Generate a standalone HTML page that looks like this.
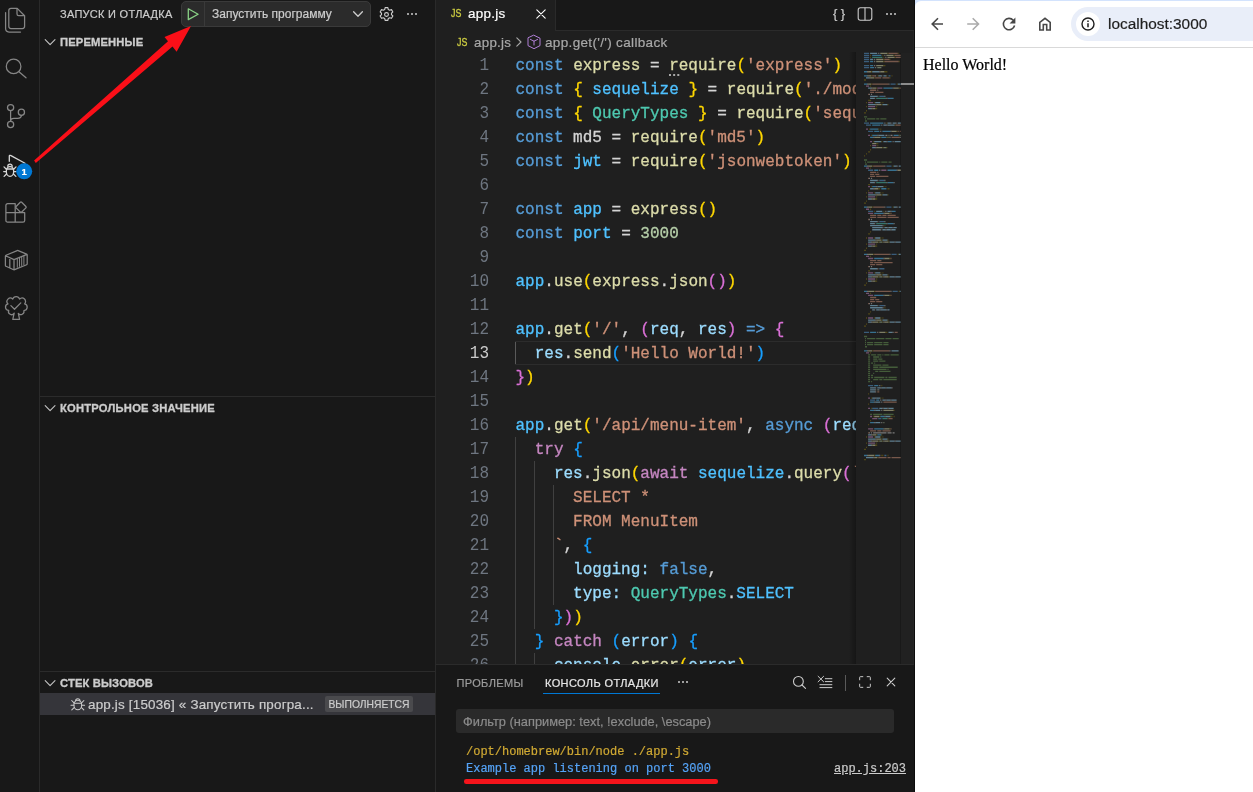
<!DOCTYPE html>
<html lang="ru">
<head>
<meta charset="utf-8">
<title>app.js</title>
<style>
*{box-sizing:border-box;margin:0;padding:0}
html,body{width:1253px;height:792px;overflow:hidden;background:#181818}
body{position:relative;font-family:"Liberation Sans",sans-serif;color:#ccc;font-size:13px}
.abs{position:absolute}
#activity,#sidebar,#editor,#panel,#browser{will-change:transform}
#activity{left:0;top:0;width:40px;height:792px;background:#181818;border-right:1px solid #2a2a2a}
#sidebar{left:40px;top:0;width:396px;height:792px;background:#181818;border-right:1px solid #2a2a2a}
#editor{left:436px;top:0;width:479px;height:664px;background:#1f1f1f;overflow:hidden}
#panel{left:436px;top:664px;width:479px;height:128px;background:#181818;border-top:1px solid #2b2b2b}
#browser{left:915px;top:0;width:338px;height:792px;background:#fff}
.t{position:absolute;white-space:pre;line-height:1;-webkit-text-stroke:.2px}
.sb-title{font-size:11px;color:#ccc;left:20px;top:9px;letter-spacing:.27px}
.hdr{position:absolute;left:0;width:395px;height:22px}
.hdr .t{-webkit-text-stroke:.3px;font-weight:bold;font-size:11.200px;letter-spacing:.15px;color:#ccc;left:20px;top:6px}
.sep{position:absolute;left:0;width:395px;height:1px;background:#2b2b2b}
/* code */
#code{position:absolute;left:0.5px;top:53.5px;width:419px;height:612px;font-family:"Liberation Mono",monospace;font-size:16px;line-height:24px}
.ln{transform:scaleY(1.09);transform-origin:0 16.200px;position:absolute;left:0;width:52.5px;text-align:right;color:#6e7681;height:24px;white-space:pre}
.cl{-webkit-text-stroke:.3px;position:absolute;left:79px;height:24px;white-space:pre;color:#d4d4d4}
.k{color:#569cd6}.v{color:#9cdcfe}.c{color:#4fc1ff}.f{color:#dcdcaa}.s{color:#ce9178}.n{color:#b5cea8}
.ty{color:#4ec9b0}.p1{color:#ffd700}.p2{color:#da70d6}.p3{color:#179fff}.ct{color:#c586c0}.w{color:#d4d4d4}
.js{font-size:9.800px;color:#cbcb41;transform:scale(.9,1.08);transform-origin:0 0;-webkit-text-stroke:.35px}
.ln.cur{color:#ccc}
.guide{position:absolute;width:1px;background:#404040}
</style>
</head>
<body>
<div id="activity" class="abs">
<svg class="abs" style="left:0;top:0" width="40" height="340" viewBox="0 0 40 340" fill="none" stroke="#868686" stroke-width="1.25" stroke-linejoin="round" stroke-linecap="round">
 <!-- files -->
 <path d="M11 8.400h6.200l7.400 7.400v10.500a2.200 2.200 0 0 1-2.200 2.200h-11.400a2.200 2.200 0 0 1-2.200-2.200v-15.700a2.200 2.200 0 0 1 2.200-2.200z"/>
 <path d="M17 8.600v5.400a1.700 1.700 0 0 0 1.700 1.700h5.700"/>
 <path d="M5.600 12.600v16a3.400 3.400 0 0 0 3.400 3.400h11.500"/>
 <!-- search -->
 <circle cx="13.6" cy="66.4" r="7.3"/>
 <path d="M19 71.8l7 6"/>
 <!-- git -->
 <circle cx="10.600" cy="107.600" r="3.100"/>
 <circle cx="21.400" cy="112.200" r="3.100"/>
 <circle cx="10.600" cy="124.400" r="3.100"/>
 <path d="M10.600 110.700v10.500M21.400 115.300c0 2.200-1.400 3-3.800 3h-3.800c-2 0-3.200.9-3.200 2.600"/>
 <!-- extensions -->
 <path d="M15.200 203.700h-7.600a1.700 1.700 0 0 0-1.700 1.700v15a1.700 1.700 0 0 0 1.700 1.700h15.400a1.700 1.700 0 0 0 1.700-1.700v-7.700h-9.500zM5.900 212.700h9.300M15.200 212.700v9.400"/>
 <path d="M20.300 202.200a1 1 0 0 1 1.400 0l4.200 4.300a1 1 0 0 1 0 1.400l-4.200 4.100a1 1 0 0 1-1.400 0l-4.200-4.100a1 1 0 0 1 0-1.400z"/>
 <!-- container -->
 <path d="M5.400 256.200a1 1 0 0 1 .6-.9l11.200-4.700a1.300 1.300 0 0 1 1 0l8.400 3.500a1 1 0 0 1 .6.900v8.800a1 1 0 0 1-.6.900l-12 5a1.300 1.300 0 0 1-1 0l-7.600-3.400a1 1 0 0 1-.6-.9zM5.600 255.700l8.400 3.900 13-5.300M14 259.600v10M9.800 257.800v10"/>
 <path d="M17.300 259v8.300M19.500 258.100v8.300M21.700 257.200v8.300M23.900 256.300v8.300" stroke-width="1"/>
 <!-- testing tree -->
 <path d="M14.200 313.200a3.100 3.100 0 0 1-5.500-2.800a3.300 3.300 0 0 1-.7-6.500a3.200 3.200 0 0 1 4.700-4.800a3.600 3.600 0 0 1 6.900 0a3.200 3.200 0 0 1 5 4.800a3.400 3.400 0 0 1-.7 6.700a3.200 3.200 0 0 1-5.600 2.800l1.300 6h-6.800z"/>
 <path d="M10.900 305.600l3.600 3.700 6.300-6.400"/>
</svg>
<svg class="abs" style="left:0;top:150px" width="40" height="34" viewBox="0 150 40 34" fill="none" stroke="#d7d7d7" stroke-width="1.3" stroke-linejoin="round" stroke-linecap="round">
 <path d="M9.300 161.300v-5.200a.8.800 0 0 1 1.200-.7l14.500 7.900"/>
 <ellipse cx="10" cy="171.400" rx="3.700" ry="4.900"/>
 <path d="M6.500 169h7M7.800 166.300a2.200 2.200 0 0 1 4.400 0M6.300 169.200l-2.300-2.300M6.200 171.600h-2.500M6.500 174l-2.400 2.400M13.700 169.200l2.300-2.300M13.800 171.600h2.500M13.500 174l2.400 2.400"/>
 <circle cx="24.200" cy="171.300" r="8" fill="#0078d4" stroke="none"/>
</svg>
<div class="t" style="left:20.200px;top:166.500px;width:8px;text-align:center;font-size:9.500px;font-weight:bold;color:#fff">1</div>
</div>
<div id="sidebar" class="abs">
  <div class="t sb-title">ЗАПУСК И ОТЛАДКА</div>
  <div class="abs" style="left:141px;top:1px;width:190px;height:26px;background:#2b2b2b;border:1px solid #3a3a3a;border-radius:5px"></div>
  <div class="abs" style="left:164px;top:2px;width:1px;height:24px;background:#3a3a3a"></div>
  <svg class="abs" style="left:146px;top:7px" width="14" height="14" viewBox="0 0 14 14" fill="none" stroke="#89d185" stroke-width="1.3" stroke-linejoin="round"><path d="M2.300 1.800l9.800 5.400-9.800 5.400z"/></svg>
  <div class="t" style="left:172px;top:8px;font-size:12px;color:#ccc">Запустить программу</div>
  <svg class="abs" style="left:311px;top:9px" width="14" height="10" viewBox="0 0 14 10" fill="none" stroke="#ccc" stroke-width="1.300" stroke-linecap="round" stroke-linejoin="round"><path d="M2.600 2.700l4.400 4.600 4.400-4.600"/></svg>
  <svg class="abs" style="left:337.500px;top:5.700px" width="17" height="17" viewBox="0 0 16 16" fill="none" stroke="#ccc" stroke-width="1.050"><circle cx="8" cy="8" r="1.800"/><path stroke-linejoin="round" d="M6.700 1.500h2.600l.4 1.800 1.300.7 1.700-.6 1.300 2.200-1.300 1.200v1.400l1.300 1.200-1.300 2.200-1.700-.6-1.300.7-.4 1.800h-2.600l-.4-1.800-1.300-.7-1.700.6-1.300-2.200 1.300-1.200v-1.400l-1.300-1.200 1.300-2.200 1.700.6 1.300-.7z"/></svg>
  <div class="abs" style="left:366.500px;top:13px;width:2px;height:2px;background:#ccc;border-radius:1px;box-shadow:4px 0 0 #ccc,8px 0 0 #ccc"></div>

  <div class="hdr" style="top:31px"><svg class="abs" style="left:4px;top:6px" width="12" height="10" viewBox="0 0 12 10" fill="none" stroke="#c4c4c4" stroke-width="1.100" stroke-linecap="round" stroke-linejoin="round"><path d="M1.200 2.600l4.900 5 4.900-5"/></svg><div class="t">ПЕРЕМЕННЫЕ</div></div>
  <div class="sep" style="top:396px"></div>
  <div class="hdr" style="top:397px"><svg class="abs" style="left:4px;top:6px" width="12" height="10" viewBox="0 0 12 10" fill="none" stroke="#c4c4c4" stroke-width="1.100" stroke-linecap="round" stroke-linejoin="round"><path d="M1.200 2.600l4.900 5 4.900-5"/></svg><div class="t" style="letter-spacing:.22px">КОНТРОЛЬНОЕ ЗНАЧЕНИЕ</div></div>
  <div class="sep" style="top:671px"></div>
  <div class="hdr" style="top:672px"><svg class="abs" style="left:4px;top:6px" width="12" height="10" viewBox="0 0 12 10" fill="none" stroke="#c4c4c4" stroke-width="1.100" stroke-linecap="round" stroke-linejoin="round"><path d="M1.200 2.600l4.900 5 4.900-5"/></svg><div class="t">СТЕК ВЫЗОВОВ</div></div>
  <div class="abs" style="left:0;top:693px;width:395px;height:22px;background:#35353a"></div>
  <svg class="abs" style="left:29px;top:696px" width="18" height="18" viewBox="0 0 18 18" fill="none" stroke="#ccc" stroke-width="1.050" stroke-linecap="round"><ellipse cx="8.800" cy="9" rx="3.900" ry="4.700"/><path d="M5.200 7.200h7.200M6.600 4.900a2.200 2.200 0 0 1 4.400 0M5 6.800l-2.300-2.300M4.900 9.200h-2.900M5.100 11.600l-2.300 2.300M12.600 6.800l2.300-2.300M12.700 9.200h2.900M12.500 11.600l2.300 2.300"/></svg>
  <div class="t" style="left:48px;top:697.500px;font-size:13.400px;letter-spacing:.2px;color:#ccc">app.js [15036] « Запустить програ...</div>
  <div class="abs" style="left:285px;top:696px;width:88px;height:16px;background:#4a4a4d;border-radius:2px"></div>
  <div class="t" style="left:288.500px;top:699.500px;font-size:10.300px;color:#ccc">ВЫПОЛНЯЕТСЯ</div>
</div>
<div id="editor" class="abs">
  <!-- tab bar -->
  <div class="abs" style="left:0;top:0;width:479px;height:31px;background:#181818;border-bottom:1px solid #2b2b2b"></div>
  <div class="abs" style="left:0;top:0;width:120px;height:31px;background:#1f1f1f;border-right:1px solid #2a2a2a"></div>
  <div class="t js" style="left:15px;top:8px">JS</div>
  <div class="t" style="left:32px;top:7px;font-size:13.400px;letter-spacing:.3px;color:#fff">app.js</div>
  <svg class="abs" style="left:99px;top:8px" width="12" height="12" viewBox="0 0 12 12" fill="none" stroke="#fff" stroke-width="1.100" stroke-linecap="round"><path d="M1.800 1.800l8.400 8.400M10.200 1.800l-8.400 8.400"/></svg>
  <div class="t" style="left:397px;top:6.500px;font-size:13px;color:#ccc;letter-spacing:3.500px">{}</div>
  <svg class="abs" style="left:421px;top:6px" width="16" height="16" viewBox="0 0 16 16" fill="none" stroke="#ccc" stroke-width="1.100"><rect x="1.200" y="1.700" width="13.600" height="12.600" rx="2.200"/><path d="M8 1.700v12.600"/></svg>
  <div class="abs" style="left:449.500px;top:13px;width:2px;height:2px;background:#ccc;border-radius:1px;box-shadow:4px 0 0 #ccc,8px 0 0 #ccc"></div>
  <!-- breadcrumbs -->
  <div class="t js" style="left:20.500px;top:36.800px">JS</div>
  <div class="t" style="left:38px;top:35.500px;font-size:13.300px;letter-spacing:.3px;color:#a9a9a9">app.js</div>
  <svg class="abs" style="left:78px;top:36px" width="10" height="12" viewBox="0 0 10 12" fill="none" stroke="#a9a9a9" stroke-width="1.100" stroke-linecap="round" stroke-linejoin="round"><path d="M2.800 1.800l4.200 4.200-4.200 4.200"/></svg>
  <svg class="abs" style="left:90px;top:34px" width="16" height="16" viewBox="0 0 16 16" fill="none" stroke="#b180d7" stroke-width="1" stroke-linejoin="round" stroke-linecap="round"><path d="M8 1.300l6 2.900v7.400l-6 3.100-6-3.100v-7.400z"/><path d="M4.400 5.400l3.600 1.800 3.600-1.800M8 7.200v3.800"/></svg>
  <div class="t" style="left:109px;top:35.500px;font-size:13.500px;letter-spacing:.34px;color:#a9a9a9">app.get('/') callback</div>
  <!-- code -->
  <div id="code">
  <div class="abs" style="left:78.5px;top:287.5px;width:352px;height:24px;border:1px solid #2c2c2c"></div>
  <div class="guide" style="left:78.5px;top:383.5px;height:228px"></div>
  <div class="guide" style="left:97.5px;top:407.5px;height:168px"></div>
  <div class="guide" style="left:97.5px;top:599.5px;height:12px"></div>
  <div class="guide" style="left:116.5px;top:431.5px;height:120px"></div>
  <div class="guide" style="left:78.5px;top:288.5px;height:22px;background:#5a5a5a"></div>
<div class="ln" style="top:0px">1</div>
<div class="cl" style="top:0px"><span class="k">const</span> <span class="f">express</span> = <span class="f">require</span><span class="p1">(</span><span class="s">'express'</span><span class="p1">)</span></div>
<div class="ln" style="top:24px">2</div>
<div class="cl" style="top:24px"><span class="k">const</span> <span class="p1">{</span> <span class="c">sequelize</span> <span class="p1">}</span> = <span class="f">require</span><span class="p1">(</span><span class="s">'./models'</span><span class="p1">)</span></div>
<div class="ln" style="top:48px">3</div>
<div class="cl" style="top:48px"><span class="k">const</span> <span class="p1">{</span> <span class="ty">QueryTypes</span> <span class="p1">}</span> = <span class="f">require</span><span class="p1">(</span><span class="s">'sequelize'</span><span class="p1">)</span></div>
<div class="ln" style="top:72px">4</div>
<div class="cl" style="top:72px"><span class="k">const</span> md5 = <span class="f">require</span><span class="p1">(</span><span class="s">'md5'</span><span class="p1">)</span></div>
<div class="ln" style="top:96px">5</div>
<div class="cl" style="top:96px"><span class="k">const</span> <span class="c">jwt</span> = <span class="f">require</span><span class="p1">(</span><span class="s">'jsonwebtoken'</span><span class="p1">)</span></div>
<div class="ln" style="top:120px">6</div>
<div class="ln" style="top:144px">7</div>
<div class="cl" style="top:144px"><span class="k">const</span> <span class="c">app</span> = <span class="f">express</span><span class="p1">()</span></div>
<div class="ln" style="top:168px">8</div>
<div class="cl" style="top:168px"><span class="k">const</span> <span class="c">port</span> = <span class="n">3000</span></div>
<div class="ln" style="top:192px">9</div>
<div class="ln" style="top:216px">10</div>
<div class="cl" style="top:216px"><span class="c">app</span>.<span class="f">use</span><span class="p1">(</span><span class="f">express</span>.<span class="f">json</span><span class="p2">()</span><span class="p1">)</span></div>
<div class="ln" style="top:240px">11</div>
<div class="ln" style="top:264px">12</div>
<div class="cl" style="top:264px"><span class="c">app</span>.<span class="f">get</span><span class="p1">(</span><span class="s">'/'</span>, <span class="p2">(</span><span class="v">req</span>, <span class="v">res</span><span class="p2">)</span> <span class="k">=&gt;</span> <span class="p2">{</span></div>
<div class="ln cur" style="top:288px">13</div>
<div class="cl" style="top:288px">  <span class="v">res</span>.<span class="f">send</span><span class="p3">(</span><span class="s">'Hello World!'</span><span class="p3">)</span></div>
<div class="ln" style="top:312px">14</div>
<div class="cl" style="top:312px"><span class="p2">}</span><span class="p1">)</span></div>
<div class="ln" style="top:336px">15</div>
<div class="ln" style="top:360px">16</div>
<div class="cl" style="top:360px"><span class="c">app</span>.<span class="f">get</span><span class="p1">(</span><span class="s">'/api/menu-item'</span>, <span class="k">async</span> <span class="p2">(</span><span class="v">req</span>, <span class="v">res</span><span class="p2">)</span> <span class="k">=&gt;</span> <span class="p2">{</span></div>
<div class="ln" style="top:384px">17</div>
<div class="cl" style="top:384px">  <span class="ct">try</span> <span class="p3">{</span></div>
<div class="ln" style="top:408px">18</div>
<div class="cl" style="top:408px">    <span class="v">res</span>.<span class="f">json</span><span class="p1">(</span><span class="ct">await</span> <span class="c">sequelize</span>.<span class="f">query</span><span class="p2">(</span><span class="s">`</span></div>
<div class="ln" style="top:432px">19</div>
<div class="cl" style="top:432px"><span class="s">      SELECT *</span></div>
<div class="ln" style="top:456px">20</div>
<div class="cl" style="top:456px"><span class="s">      FROM MenuItem</span></div>
<div class="ln" style="top:480px">21</div>
<div class="cl" style="top:480px"><span class="s">    `</span>, <span class="p3">{</span></div>
<div class="ln" style="top:504px">22</div>
<div class="cl" style="top:504px">      <span class="v">logging</span><span class="v">:</span> <span class="k">false</span>,</div>
<div class="ln" style="top:528px">23</div>
<div class="cl" style="top:528px">      <span class="v">type</span><span class="v">:</span> <span class="ty">QueryTypes</span>.<span class="c">SELECT</span></div>
<div class="ln" style="top:552px">24</div>
<div class="cl" style="top:552px">    <span class="p3">}</span><span class="p2">)</span><span class="p1">)</span></div>
<div class="ln" style="top:576px">25</div>
<div class="cl" style="top:576px">  <span class="p3">}</span> <span class="ct">catch</span> <span class="p3">(</span><span class="v">error</span><span class="p3">)</span> <span class="p3">{</span></div>
<div class="ln" style="top:600px">26</div>
<div class="cl" style="top:600px">    <span class="v">console</span>.<span class="f">error</span><span class="p1">(</span><span class="v">error</span><span class="p1">)</span></div>
  </div>
  <div class="abs" style="left:232.800px;top:74px;width:2px;height:2px;background:#a8a8a8;box-shadow:4.150px 0 0 #a8a8a8,8.300px 0 0 #a8a8a8"></div>
  <!-- minimap -->
  <div class="abs" style="left:413px;top:52px;width:8px;height:612px;background:linear-gradient(90deg,rgba(0,0,0,0),rgba(0,0,0,.35))"></div>
  <div class="abs" style="left:420px;top:52px;width:45px;height:612px;background:#1f1f1f"></div>
  <div class="abs" style="left:464px;top:53px;width:14px;height:611px;background:#212121;border-left:1px solid #191919"></div>
  <div class="abs" style="left:477px;top:31px;width:1px;height:633px;background:#252525"></div>
  <div class="abs" style="left:465px;top:83px;width:13px;height:2px;background:#8c8c8c"></div>
  <div class="abs" style="left:478px;top:0;width:1px;height:664px;background:#181818"></div>
  <svg class="abs" style="left:428px;top:0" width="37" height="664" viewBox="864 0 37 664" fill="none" stroke-width="1.3" opacity=".5">
<path stroke="#569cd6" d="M864 53.3h5.1M864 55.35h5.1M864 57.4h5.1M864 59.46h5.1M864 61.51h5.1M864 65.61h5.1M864 67.66h5.1M888.5 75.87h2M890.5 84.08h5.1M879.3 96.39h5.1M864 123.07h5.1M866 125.12h5.1M868.1 131.28h5.1M886.4 166.16h5.1M868.1 170.26h5.1M879.3 180.52h5.1M886.4 207.2h5.1M868.1 211.3h5.1M879.3 221.56h5.1M891.5 254.4h5.1M879.3 268.76h5.1M892.6 291.33h5.1M879.3 305.7h5.1M864 332.37h5.1M868.1 385.72h5.1M870.1 400.09h5.1M872.2 408.3h6.1M878.3 418.56h3.1M884.4 455.49h2"/>
<path stroke="#9cdcfe" d="M870.1 53.3h7.1M870.1 59.46h3.1M872.2 71.77h7.1M878.3 75.87h3.1M883.4 75.87h3.1M866 77.92h3.1M897.7 84.08h3.1M868.1 88.18h3.1M870.1 96.39h7.1M870.1 98.44h4.1M875.2 102.55h5.1M868.1 104.6h7.1M882.4 104.6h5.1M868.1 108.7h3.1M887.5 123.07h3.1M892.6 123.07h3.1M897.7 123.07h3.1M883.4 125.12h3.1M887.5 125.12h7.1M878.3 135.38h6.1M874.2 141.54h7.1M883.4 141.54h3.1M894.6 141.54h6.1M872.2 147.69h3.1M893.6 166.16h3.1M898.7 166.16h2M870.1 180.52h7.1M870.1 182.58h4.1M877.3 186.68h6.1M870.1 188.73h3.1M875.2 192.84h5.1M868.1 194.89h7.1M882.4 194.89h5.1M868.1 198.99h3.1M893.6 207.2h3.1M898.7 207.2h2M876.2 211.3h6.1M887.5 211.3h3.1M870.1 221.56h7.1M870.1 223.62h4.1M870.1 225.67h12.2M872.2 227.72h10.2M884.4 227.72h3.1M888.5 227.72h4.1M893.6 227.72h3.1M872.2 229.77h8.2M882.4 229.77h3.1M886.4 229.77h4.1M891.5 229.77h4.1M875.2 237.98h5.1M868.1 240.03h7.1M882.4 240.03h5.1M868.1 242.08h3.1M889.5 242.08h5.1M895.6 242.08h5.1M868.1 246.19h3.1M898.7 254.4h2M870.1 268.76h7.1M875.2 272.86h5.1M868.1 274.92h7.1M882.4 274.92h5.1M868.1 276.97h3.1M889.5 276.97h5.1M895.6 276.97h5.1M868.1 281.07h3.1M899.7 291.33h1M870.1 305.7h7.1M870.1 307.75h12.2M872.2 309.8h2M876.2 309.8h3.1M880.3 309.8h6.1M887.5 309.8h2M875.2 318.01h5.1M868.1 320.06h7.1M882.4 320.06h5.1M868.1 322.11h3.1M889.5 322.11h5.1M895.6 322.11h5.1M888.5 332.37h4.1M891.5 350.84h7.1M870.1 387.78h5.1M877.3 387.78h3.1M881.3 387.78h4.1M886.4 387.78h5.1M870.1 389.83h5.1M870.1 391.88h5.1M872.2 398.04h3.1M876.2 398.04h4.1M882.4 400.09h3.1M886.4 400.09h4.1M891.5 400.09h5.1M875.2 402.14h5.1M879.3 408.3h3.1M883.4 408.3h4.1M888.5 408.3h5.1M875.2 410.35h5.1M885.4 416.5h5.1M875.2 422.66h5.1M868.1 434.97h3.1M875.2 437.02h5.1M868.1 439.08h7.1M882.4 439.08h5.1M868.1 441.13h3.1M889.5 441.13h5.1M895.6 441.13h5.1M868.1 445.23h3.1M866 457.54h7.1"/>
<path stroke="#4fc1ff" d="M872.2 55.35h9.2M870.1 61.51h3.1M870.1 65.61h3.1M870.1 67.66h4.1M864 71.77h3.1M864 75.87h3.1M864 84.08h3.1M883.4 88.18h9.2M887.5 98.44h6.1M870.1 123.07h13.3M872.2 125.12h8.2M870.1 129.22h8.2M874.2 131.28h5.1M882.4 131.28h8.2M872.2 135.38h5.1M893.6 135.38h5.1M870.1 137.43h3.1M881.3 137.43h5.1M887.5 141.54h4.1M864 166.16h3.1M874.2 170.26h4.1M887.5 170.26h9.2M887.5 182.58h6.1M872.2 186.68h4.1M881.3 188.73h5.1M864 207.2h3.1M891.5 211.3h4.1M874.2 213.36h9.2M887.5 223.62h6.1M864 254.4h3.1M874.2 258.5h9.2M864 291.33h3.1M874.2 295.44h9.2M870.1 332.37h6.1M864 350.84h3.1M874.2 385.72h4.1M876.2 400.09h3.1M870.1 402.14h4.1M870.1 410.35h4.1M880.3 416.5h4.1M870.1 422.66h4.1M874.2 428.82h9.2M877.3 434.97h4.1M864 455.49h3.1M875.2 455.49h4.1"/>
<path stroke="#dcdcaa" d="M880.3 53.3h7.1M886.4 55.35h7.1M887.5 57.4h7.1M876.2 59.46h7.1M876.2 61.51h7.1M876.2 65.61h7.1M868.1 71.77h3.1M880.3 71.77h4.1M868.1 75.87h3.1M870.1 77.92h4.1M868.1 84.08h3.1M872.2 88.18h4.1M893.6 88.18h5.1M876.2 104.6h5.1M872.2 108.7h3.1M891.5 131.28h5.1M874.2 137.43h6.1M872.2 143.59h4.1M876.2 147.69h6.1M868.1 166.16h4.1M897.7 170.26h3.1M874.2 188.73h4.1M876.2 194.89h5.1M872.2 198.99h3.1M868.1 207.2h4.1M884.4 213.36h5.1M876.2 240.03h5.1M872.2 242.08h6.1M884.4 242.08h4.1M872.2 246.19h3.1M868.1 254.4h5.1M884.4 258.5h5.1M876.2 274.92h5.1M872.2 276.97h6.1M884.4 276.97h4.1M872.2 281.07h3.1M868.1 291.33h6.1M884.4 295.44h5.1M876.2 320.06h5.1M872.2 322.11h6.1M884.4 322.11h4.1M879.3 332.37h6.1M868.1 350.84h4.1M883.4 410.35h10.2M874.2 416.5h5.1M884.4 428.82h5.1M872.2 434.97h4.1M876.2 439.08h5.1M872.2 441.13h6.1M884.4 441.13h4.1M872.2 445.23h3.1M868.1 455.49h6.1M874.2 457.54h3.1"/>
<path stroke="#ce9178" d="M888.5 53.3h9.2M894.6 55.35h6.1M895.6 57.4h5.1M884.4 59.46h5.1M884.4 61.51h14.3M872.2 75.87h3.1M875.2 77.92h6.1M882.4 77.92h7.1M872.2 84.08h16.3M899.7 88.18h1M870.1 90.24h6.1M877.3 90.24h1M870.1 92.29h4.1M875.2 92.29h8.2M868.1 94.34h1M895.6 125.12h5.1M897.7 131.28h1M899.7 131.28h1M891.5 137.43h8.2M873.2 166.16h11.2M870.1 172.32h6.1M877.3 172.32h1M870.1 174.37h4.1M875.2 174.37h4.1M870.1 176.42h5.1M876.2 176.42h12.2M868.1 178.47h1M873.2 207.2h11.2M890.5 213.36h1M870.1 215.41h6.1M877.3 215.41h4.1M882.4 215.41h4.1M887.5 215.41h8.2M870.1 217.46h6.1M877.3 217.46h9.2M887.5 217.46h11.2M868.1 219.51h1M874.2 254.4h15.3M890.5 258.5h1M870.1 260.55h6.1M877.3 260.55h4.1M870.1 262.6h3.1M874.2 262.6h18.4M870.1 264.66h5.1M876.2 264.66h6.1M868.1 266.71h1M875.2 291.33h15.3M890.5 295.44h1M870.1 297.49h6.1M870.1 299.54h4.1M875.2 299.54h4.1M870.1 301.59h5.1M876.2 301.59h6.1M868.1 303.64h1M894.6 332.37h3.1M873.2 350.84h16.3M877.3 391.88h2M883.4 402.14h13.3M888.5 418.56h4.1M890.5 428.82h1M870.1 430.87h6.1M877.3 430.87h4.1M882.4 430.87h8.2M868.1 432.92h1M878.3 457.54h8.2M887.5 457.54h3.1M891.5 457.54h9.2"/>
<path stroke="#b5cea8" d="M877.3 67.66h4.1M888.5 135.38h1M899.7 135.38h1M887.5 137.43h1M883.4 147.69h3.1M879.3 242.08h3.1M879.3 276.97h3.1M879.3 322.11h3.1M877.3 389.83h1M883.4 422.66h1M879.3 441.13h3.1"/>
<path stroke="#4ec9b0" d="M872.2 57.4h10.2M876.2 98.44h10.2M876.2 182.58h10.2M876.2 223.62h10.2M882.4 418.56h5.1"/>
<path stroke="#ffd700" stroke-opacity=".45" d="M887.5 53.3h1M897.7 53.3h1M870.1 55.35h1M882.4 55.35h1M893.6 55.35h1M870.1 57.4h1M883.4 57.4h1M894.6 57.4h1M883.4 59.46h1M889.5 59.46h1M883.4 61.51h1M898.7 61.51h1M883.4 65.61h1M884.4 65.61h1M871.1 71.77h1M884.4 71.77h1M885.4 71.77h1M886.4 71.77h1M871.1 75.87h1M877.3 75.87h1M886.4 75.87h1M891.5 75.87h1M874.2 77.92h1M889.5 77.92h1M864 79.98h1M865 79.98h1M871.1 84.08h1M896.6 84.08h1M870.1 86.13h1M876.2 88.18h1M898.7 88.18h1M868.1 100.5h1M869.1 100.5h1M870.1 100.5h1M866 102.55h1M874.2 102.55h1M880.3 102.55h1M882.4 102.55h1M881.3 104.6h1M887.5 104.6h1M866 106.65h1M876.2 106.65h1M875.2 108.7h1M876.2 108.7h1M866 110.76h1M864 112.81h1M865 112.81h1M886.4 123.07h1M894.6 125.12h1M869.1 129.22h1M878.3 129.22h1M880.3 129.22h1M896.6 131.28h1M871.1 135.38h1M898.7 135.38h1M880.3 137.43h1M886.4 137.43h1M888.5 137.43h1M873.2 141.54h1M881.3 141.54h1M876.2 143.59h1M877.3 143.59h1M870.1 145.64h1M877.3 145.64h1M882.4 147.69h1M886.4 147.69h1M870.1 149.74h1M868.1 151.8h1M869.1 151.8h1M866 153.85h1M864 155.9h1M872.2 166.16h1M892.6 166.16h1M870.1 168.21h1M868.1 184.63h1M869.1 184.63h1M871.1 186.68h1M883.4 186.68h1M885.4 186.68h1M878.3 188.73h1M879.3 188.73h1M887.5 188.73h1M888.5 188.73h1M868.1 190.78h1M866 192.84h1M874.2 192.84h1M880.3 192.84h1M882.4 192.84h1M881.3 194.89h1M887.5 194.89h1M866 196.94h1M876.2 196.94h1M875.2 198.99h1M876.2 198.99h1M866 201.04h1M864 203.1h1M865 203.1h1M872.2 207.2h1M892.6 207.2h1M870.1 209.25h1M874.2 211.3h1M883.4 211.3h1M889.5 213.36h1M884.4 225.67h1M870.1 231.82h1M868.1 233.88h1M869.1 233.88h1M866 237.98h1M874.2 237.98h1M880.3 237.98h1M882.4 237.98h1M881.3 240.03h1M887.5 240.03h1M878.3 242.08h1M882.4 242.08h1M888.5 242.08h1M866 244.14h1M876.2 244.14h1M875.2 246.19h1M876.2 246.19h1M866 248.24h1M864 250.29h1M865 250.29h1M873.2 254.4h1M897.7 254.4h1M870.1 256.45h1M889.5 258.5h1M868.1 270.81h1M869.1 270.81h1M866 272.86h1M874.2 272.86h1M880.3 272.86h1M882.4 272.86h1M881.3 274.92h1M887.5 274.92h1M878.3 276.97h1M882.4 276.97h1M888.5 276.97h1M866 279.02h1M876.2 279.02h1M875.2 281.07h1M876.2 281.07h1M866 283.12h1M864 285.18h1M865 285.18h1M874.2 291.33h1M898.7 291.33h1M870.1 293.38h1M889.5 295.44h1M884.4 307.75h1M870.1 311.85h1M868.1 313.9h1M869.1 313.9h1M866 318.01h1M874.2 318.01h1M880.3 318.01h1M882.4 318.01h1M881.3 320.06h1M887.5 320.06h1M878.3 322.11h1M882.4 322.11h1M888.5 322.11h1M866 324.16h1M864 326.22h1M865 326.22h1M885.4 332.37h1M886.4 332.37h1M872.2 350.84h1M870.1 352.89h1M881.3 385.72h1M868.1 393.93h1M871.1 398.04h1M880.3 398.04h1M882.4 398.04h1M868.1 404.19h1M871.1 408.3h1M893.6 410.35h1M873.2 416.5h1M879.3 416.5h1M890.5 416.5h1M891.5 416.5h1M893.6 416.5h1M887.5 418.56h1M870.1 420.61h1M868.1 424.71h1M889.5 428.82h1M876.2 434.97h1M881.3 434.97h1M866 437.02h1M874.2 437.02h1M880.3 437.02h1M882.4 437.02h1M881.3 439.08h1M887.5 439.08h1M878.3 441.13h1M882.4 441.13h1M888.5 441.13h1M866 443.18h1M876.2 443.18h1M875.2 445.23h1M876.2 445.23h1M866 447.28h1M864 449.34h1M865 449.34h1M874.2 455.49h1M881.3 455.49h1M882.4 455.49h1M887.5 455.49h1M877.3 457.54h1M864 459.6h1M865 459.6h1"/>
<path stroke="#c586c0" d="M866 86.13h3.1M877.3 88.18h5.1M868.1 102.55h5.1M868.1 106.65h7.1M866 129.22h2M868.1 135.38h2M870.1 141.54h2M872.2 145.64h4.1M866 168.21h3.1M881.3 170.26h5.1M868.1 186.68h2M868.1 192.84h5.1M868.1 196.94h7.1M866 209.25h3.1M868.1 213.36h5.1M868.1 237.98h5.1M868.1 244.14h7.1M866 256.45h3.1M868.1 258.5h5.1M868.1 272.86h5.1M868.1 279.02h7.1M866 293.38h3.1M868.1 295.44h5.1M868.1 318.01h5.1M866 352.89h3.1M868.1 398.04h2M868.1 408.3h2M870.1 416.5h2M872.2 418.56h5.1M868.1 428.82h5.1M868.1 437.02h5.1M868.1 443.18h7.1"/>
<path stroke="#d4d4d4" d="M878.3 53.3h1M884.4 55.35h1M885.4 57.4h1M874.2 59.46h1M874.2 61.51h1M874.2 65.61h1M875.2 67.66h1M867.1 71.77h1M879.3 71.77h1M867.1 75.87h1M875.2 75.87h1M881.3 75.87h1M869.1 77.92h1M867.1 84.08h1M888.5 84.08h1M871.1 88.18h1M892.6 88.18h1M869.1 94.34h1M871.1 94.34h1M877.3 96.39h1M884.4 96.39h1M874.2 98.44h1M886.4 98.44h1M875.2 104.6h1M871.1 108.7h1M884.4 123.07h1M890.5 123.07h1M895.6 123.07h1M881.3 125.12h1M886.4 125.12h1M880.3 131.28h1M890.5 131.28h1M877.3 135.38h1M885.4 135.38h1M886.4 135.38h1M890.5 135.38h1M891.5 135.38h1M873.2 137.43h1M889.5 137.43h1M899.7 137.43h1M886.4 141.54h1M892.6 141.54h1M875.2 147.69h1M867.1 166.16h1M884.4 166.16h1M896.6 166.16h1M879.3 170.26h1M896.6 170.26h1M869.1 178.47h1M871.1 178.47h1M877.3 180.52h1M884.4 180.52h1M874.2 182.58h1M886.4 182.58h1M893.6 182.58h1M876.2 186.68h1M873.2 188.73h1M875.2 194.89h1M871.1 198.99h1M867.1 207.2h1M884.4 207.2h1M896.6 207.2h1M885.4 211.3h1M890.5 211.3h1M883.4 213.36h1M869.1 219.51h1M871.1 219.51h1M877.3 221.56h1M884.4 221.56h1M874.2 223.62h1M886.4 223.62h1M893.6 223.62h1M882.4 225.67h1M882.4 227.72h1M887.5 227.72h1M892.6 227.72h1M880.3 229.77h1M885.4 229.77h1M890.5 229.77h1M875.2 240.03h1M871.1 242.08h1M883.4 242.08h1M894.6 242.08h1M871.1 246.19h1M867.1 254.4h1M889.5 254.4h1M883.4 258.5h1M869.1 266.71h1M871.1 266.71h1M877.3 268.76h1M875.2 274.92h1M871.1 276.97h1M883.4 276.97h1M894.6 276.97h1M871.1 281.07h1M867.1 291.33h1M890.5 291.33h1M883.4 295.44h1M869.1 303.64h1M871.1 303.64h1M877.3 305.7h1M884.4 305.7h1M882.4 307.75h1M874.2 309.8h1M879.3 309.8h1M886.4 309.8h1M875.2 320.06h1M871.1 322.11h1M883.4 322.11h1M894.6 322.11h1M877.3 332.37h1M892.6 332.37h1M867.1 350.84h1M889.5 350.84h1M879.3 385.72h1M875.2 387.78h1M880.3 387.78h1M885.4 387.78h1M891.5 387.78h1M875.2 389.83h1M878.3 389.83h1M875.2 391.88h1M875.2 398.04h1M880.3 400.09h1M885.4 400.09h1M890.5 400.09h1M874.2 402.14h1M881.3 402.14h1M882.4 408.3h1M887.5 408.3h1M874.2 410.35h1M881.3 410.35h1M884.4 416.5h1M874.2 422.66h1M881.3 422.66h1M883.4 428.82h1M869.1 432.92h1M871.1 432.92h1M873.2 432.92h13.3M887.5 432.92h4.1M892.6 432.92h2M871.1 434.97h1M875.2 439.08h1M871.1 441.13h1M883.4 441.13h1M894.6 441.13h1M871.1 445.23h1M867.1 455.49h1M879.3 455.49h1M873.2 457.54h1"/>
<path stroke="#6a9955" d="M864 116.91h3.1M865 118.96h1M867.1 118.96h8.2M876.2 118.96h3.1M880.3 118.96h6.1M865 121.02h2M864 160h3.1M865 162.06h1M867.1 162.06h11.2M879.3 162.06h1M881.3 162.06h6.1M888.5 162.06h3.1M865 164.11h2M864 336.48h3.1M865 338.53h1M867.1 338.53h8.2M876.2 338.53h8.2M885.4 338.53h6.1M892.6 338.53h6.1M865 340.58h1M865 342.63h1M867.1 342.63h6.1M874.2 342.63h8.2M883.4 342.63h5.1M865 344.68h1M867.1 344.68h6.1M874.2 344.68h8.2M883.4 344.68h5.1M865 346.74h2M868.1 354.94h2M871.1 354.94h5.1M877.3 354.94h4.1M882.4 354.94h1M884.4 354.94h5.1M890.5 354.94h8.2M868.1 357h2M873.2 357h6.1M880.3 357h1M868.1 359.05h2M873.2 359.05h4.1M878.3 359.05h4.1M868.1 361.1h2M873.2 361.1h5.1M879.3 361.1h6.1M868.1 363.15h2M871.1 363.15h2M874.2 363.15h1M868.1 365.2h2M873.2 365.2h8.2M882.4 365.2h6.1M868.1 367.26h2M873.2 367.26h5.1M879.3 367.26h18.4M868.1 369.31h2M873.2 369.31h13.3M887.5 369.31h1M868.1 371.36h2M875.2 371.36h3.1M879.3 371.36h11.2M868.1 373.41h2M873.2 373.41h1M868.1 375.46h2M871.1 375.46h2M868.1 377.52h2M871.1 377.52h2M874.2 377.52h10.2M885.4 377.52h2M888.5 377.52h8.2M868.1 379.57h2M873.2 379.57h5.1M879.3 379.57h3.1M883.4 379.57h13.3M868.1 381.62h2M871.1 381.62h1M870.1 414.45h2M873.2 414.45h9.2M883.4 414.45h10.2"/>
</svg>
</div>
<div id="panel" class="abs">
  <div class="t" style="left:20.500px;top:12.500px;font-size:11px;color:#9d9d9d;letter-spacing:.35px">ПРОБЛЕМЫ</div>
  <div class="t" style="left:109px;top:12.500px;font-size:11px;color:#e7e7e7;letter-spacing:.38px">КОНСОЛЬ ОТЛАДКИ</div>
  <div class="abs" style="left:107px;top:28px;width:117px;height:1px;background:#0078d4"></div>
  <div class="abs" style="left:242px;top:16px;width:2px;height:2px;background:#ccc;border-radius:1px;box-shadow:4px 0 0 #ccc,8px 0 0 #ccc"></div>
  <svg class="abs" style="left:355px;top:9px" width="16" height="16" viewBox="0 0 16 16" fill="none" stroke="#ccc" stroke-width="1.100" stroke-linecap="round"><circle cx="7.400" cy="7.400" r="4.900"/><path d="M11 11l3.500 3.300"/></svg>
  <svg class="abs" style="left:381px;top:9px" width="16" height="16" viewBox="0 0 16 16" fill="none" stroke="#ccc" stroke-width="1" stroke-linecap="round"><path d="M1.100 2.300l5.500 5.500M6.600 2.300l-5.500 5.500M8.300 4.700h6.600M8.300 7.600h6.600M2.900 10.700h12M2.900 13.600h12"/></svg>
  <div class="abs" style="left:409px;top:10px;width:1px;height:16px;background:#5a5a5a"></div>
  <svg class="abs" style="left:421px;top:9px" width="16" height="16" viewBox="-1 -1 18 18" fill="none" stroke="#ccc" stroke-width="1.100" stroke-linejoin="round"><path d="M2 6v-3.200a.8.800 0 0 1 .8-.8h3.200M10 2h3.200a.8.800 0 0 1 .8.800v3.200M14 10v3.200a.8.800 0 0 1-.8.800h-3.200M6 14h-3.200a.8.800 0 0 1-.8-.8v-3.200"/></svg>
  <svg class="abs" style="left:449px;top:11px" width="12" height="12" viewBox="0 0 12 12" fill="none" stroke="#ccc" stroke-width="1.100" stroke-linecap="round"><path d="M2.200 2.200l7.600 7.600M9.800 2.200l-7.600 7.600"/></svg>
  <div class="abs" style="left:20px;top:44px;width:438px;height:24px;background:#2a2a2a;border-radius:3px"></div>
  <div class="t" style="left:27px;top:50.500px;font-size:12.800px;color:#8b8b8b">Фильтр (например: text, !exclude, \escape)</div>
  <div class="t" style="left:30px;top:81px;font-family:'Liberation Mono',monospace;font-size:12px;-webkit-text-stroke:.2px;color:#d0a933">/opt/homebrew/bin/node ./app.js</div>
  <div class="t" style="left:30px;top:98px;font-family:'Liberation Mono',monospace;font-size:12px;-webkit-text-stroke:.2px;color:#55a3f7">Example app listening on port 3000</div>
  <div class="t" style="left:398px;top:98px;font-family:'Liberation Mono',monospace;font-size:12px;-webkit-text-stroke:.2px;color:#ccc;text-decoration:underline">app.js:203</div>
  <div class="abs" style="left:28px;top:114.300px;width:253.500px;height:4.400px;border-radius:2.200px;background:#f5141b"></div>
</div>
<div class="abs" style="left:914px;top:0;width:1px;height:792px;background:#0c0c0c"></div>
<div id="browser" class="abs">
  <div class="abs" style="left:0;top:0;width:338px;height:8px;background:#d3e3fd"></div>
  <div class="abs" style="left:0;top:1px;width:338px;height:46px;background:#fff;border-top-left-radius:6px"></div>
  <div class="abs" style="left:0;top:47px;width:338px;height:1px;background:#d9d9d9"></div>
  <svg class="abs" style="left:0;top:8px" width="160" height="32" viewBox="915 8 160 32" fill="none" stroke="#474747" stroke-width="1.600" stroke-linecap="butt" stroke-linejoin="miter">
    <path d="M943 24h-10.500M938 18.200l-5.800 5.800 5.800 5.800"/>
    <path stroke="#ababab" d="M967.200 24h10.500M972.700 18.200l5.800 5.800-5.800 5.800"/>
    <path d="M1013.300 20.200a5.700 5.700 0 1 0 1.300 5.300"/>
    <path d="M1015.400 17.600v5.800h-5.800z" fill="#474747" stroke="none"/>
    <path d="M1039.800 30v-7.700l5.200-4 5.200 4v7.700h-3.500v-5.500h-3.400v5.500z"/>
  </svg>
  <div class="abs" style="left:156px;top:7px;width:200px;height:34px;background:#e9eef9;border-radius:17px"></div>
  <div class="abs" style="left:161px;top:12px;width:24px;height:24px;background:#fff;border-radius:12px"></div>
  <svg class="abs" style="left:165px;top:16px" width="16" height="16" viewBox="0 0 16 16" fill="none" stroke="#1f1f1f" stroke-width="1.400"><circle cx="8" cy="8" r="6"/><path d="M8 7.300v4M8 4.500v1.500" stroke-width="1.500"/></svg>
  <div class="t" style="left:193px;top:16px;font-size:15.400px;color:#1f1f1f">localhost:3000</div>
  <div class="t" style="left:8px;top:57px;font-family:'Liberation Serif',serif;font-size:16px;color:#000;-webkit-text-stroke:.2px">Hello World!</div>
</div>
<svg class="abs" style="left:0;top:0" width="260" height="200" viewBox="0 0 260 200"><path fill="#fa0f18" d="M34.100 160.400L168 41.200 164.500 37 191 26.100 176.600 51.700 172.500 46.500 35.800 162.900z"/></svg>
</body>
</html>
